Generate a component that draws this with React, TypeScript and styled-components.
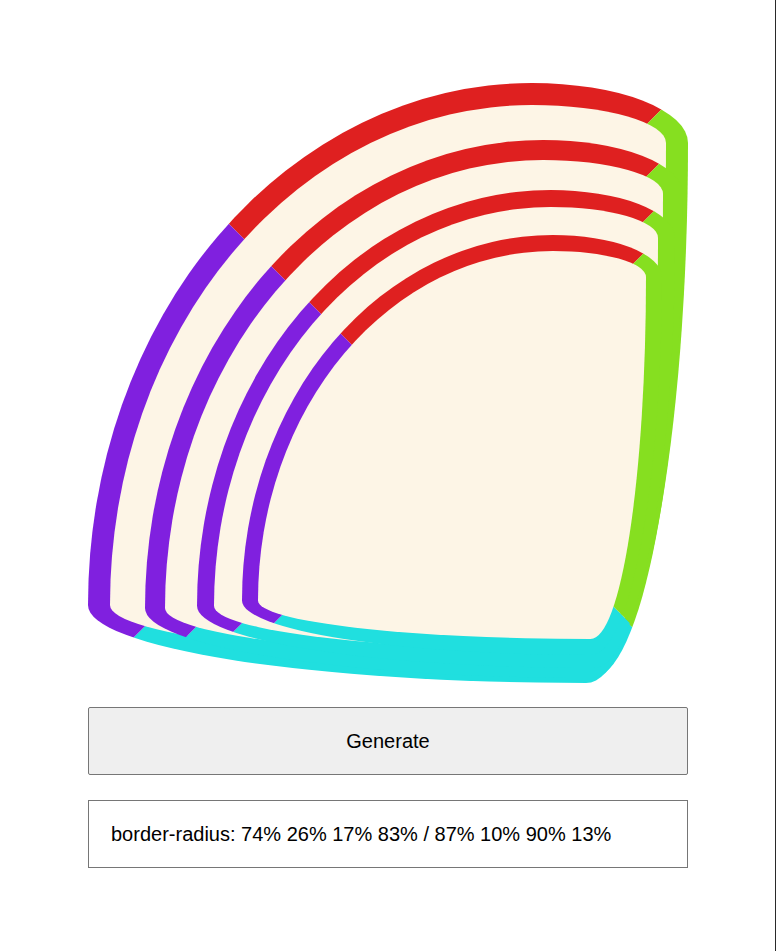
import React from "react";
import styled, { createGlobalStyle } from "styled-components";

const GlobalStyle = createGlobalStyle`
  html, body {
    margin: 0;
    padding: 0;
    background: #ffffff;
  }
  body {
    font-family: "Liberation Sans", Arial, sans-serif;
    color: #000000;
  }
  * { box-sizing: border-box; }
`;

const Page = styled.div`
  width: 776px;
  min-height: 951px;
  padding: 83px 87px 0 88px;
  border-right: 1px solid #2a2a2a;
  display: flex;
  flex-direction: column;
  gap: 24px;
`;

const Stage = styled.div`
  width: 600px;
  height: 600px;
`;

const RADIUS = "74% 26% 17% 83% / 87% 10% 90% 13%";

const Shape = styled.div<{ $size: number; $border: number; $left: number; $top: number }>`
  width: ${(p) => p.$size}px;
  height: ${(p) => p.$size}px;
  margin-left: ${(p) => p.$left}px;
  margin-top: ${(p) => p.$top}px;
  border-style: solid;
  border-width: ${(p) => p.$border}px;
  border-color: hsl(0, 75%, 50%) hsl(88, 75%, 50%) hsl(180, 75%, 50%) hsl(270, 75%, 50%);
  border-radius: ${RADIUS};
  background: #fdf5e6;
  overflow: visible;
`;

const GenerateButton = styled.button`
  width: 600px;
  height: 68px;
  margin-top: 0;
  background: #efefef;
  border: 1px solid #767676;
  border-radius: 2px;
  font-family: "Liberation Sans", Arial, sans-serif;
  font-size: 20px;
  color: #000000;
  cursor: pointer;
  padding: 0;
`;

const Output = styled.div`
  width: 600px;
  height: 68px;
  margin-top: 1px;
  border: 1px solid #767676;
  background: #ffffff;
  display: flex;
  align-items: center;
  padding: 0 22px;
  font-size: 20px;
  color: #000000;
  white-space: nowrap;
`;

type Level = { size: number; border: number; left: number; top: number };

const LEVELS: Level[] = [
  { size: 600, border: 22, left: 0, top: 0 },
  { size: 538, border: 20, left: 35, top: 35 },
  { size: 478, border: 17, left: 32, top: 30 },
  { size: 420, border: 16, left: 28, top: 28 },
];

function Nested({ index }: { index: number }) {
  const lv = LEVELS[index];
  if (!lv) return null;
  return (
    <Shape $size={lv.size} $border={lv.border} $left={lv.left} $top={lv.top}>
      <Nested index={index + 1} />
    </Shape>
  );
}

export default function App() {
  return (
    <>
      <GlobalStyle />
      <Page>
        <Stage>
          <Nested index={0} />
        </Stage>
        <GenerateButton type="button">Generate</GenerateButton>
        <Output>border-radius: 74% 26% 17% 83% / 87% 10% 90% 13%</Output>
      </Page>
    </>
  );
}
